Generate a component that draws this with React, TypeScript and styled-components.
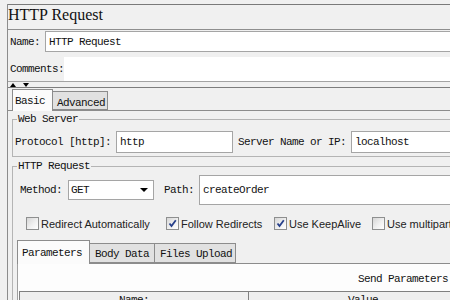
import React from "react";
import styled, { createGlobalStyle } from "styled-components";

const mono = `"Liberation Mono", "DejaVu Sans Mono", monospace`;

const GlobalStyle = createGlobalStyle`
  *, *::before, *::after { box-sizing: border-box; }
  html, body { margin: 0; padding: 0; overflow: hidden; background: #f0f0f0; }
  body { width: 450px; height: 300px; }
`;

const Window = styled.div`
  width: 490px;
  height: 296px;
  margin: 4px 0 0 7px;
  border-left: 1px solid #8c8c8c;
  font-family: ${mono};
  font-size: 11px;
  letter-spacing: -0.6px;
  color: #111;
  overflow: hidden;
`;

const TitleBar = styled.div`
  height: 26px;
  border-top: 1px solid #7a7a7a;
  border-bottom: 1px solid #8e8e8e;
  font-family: "Liberation Serif", serif;
  font-size: 16px;
  letter-spacing: 0;
  line-height: 20px;
`;

const NameRow = styled.div`
  display: flex;
  align-items: center;
  height: 22px;
  padding-top: 1px;
`;

const CommentsRow = styled.div`
  display: flex;
  align-items: center;
  height: 30px;
  padding-top: 5px;
  border-bottom: 1px solid #a3a3a3;
`;

const Caption = styled.span<{ $gap?: number }>`
  flex: none;
  white-space: nowrap;
  line-height: 14px;
  margin-left: ${p => p.$gap ?? 0}px;
`;

const Field = styled.div<{ $width?: number; $height: number; $gap?: number }>`
  flex: ${p => (p.$width ? `0 0 ${p.$width}px` : "1 1 auto")};
  height: ${p => p.$height}px;
  margin-left: ${p => p.$gap ?? 0}px;
  display: flex;
  align-items: center;
  padding: 0 3px;
  background: #fff;
  border: 1px solid #a5a5a5;
  white-space: nowrap;
`;

const CommentsArea = styled.div`
  flex: 1;
  height: 24px;
  background: #fff;
`;

const Divider = styled.div`
  display: flex;
  align-items: center;
  gap: 7px;
  height: 5px;
  padding-left: 2px;
`;

const LowerPanel = styled.div`
  border-top: 1px solid #7d7d7d;
`;

const TabStrip = styled.div<{ $height: number; $indent: number }>`
  display: flex;
  align-items: flex-end;
  height: ${p => p.$height}px;
  padding-left: ${p => p.$indent}px;
  padding-top: 1px;
  border-bottom: 1px solid #8c8c8c;
`;

const Tab = styled.div<{ $active?: boolean; $width: number; $height: number; $pad: number; $top: number }>`
  flex: 0 0 ${p => p.$width}px;
  height: ${p => p.$height}px;
  margin-left: -1px;
  margin-bottom: ${p => (p.$active ? -1 : 0)}px;
  padding-left: ${p => p.$pad}px;
  padding-top: ${p => p.$top}px;
  line-height: 14px;
  white-space: nowrap;
  background: ${p => (p.$active ? "#fbfbfb" : "#e1e1e1")};
  border: 1px solid #8c8c8c;
  border-bottom: ${p => (p.$active ? "none" : "1px solid #8c8c8c")};
  position: relative;
  z-index: ${p => (p.$active ? 1 : 0)};
  &:first-child { margin-left: 0; }
`;

const TabBody = styled.div`
  padding-left: 4px;
`;

const Group = styled.fieldset<{ $top: number }>`
  margin: ${p => p.$top}px 0 0;
  padding: 0 0 3px 2px;
  border: 1px solid #b4b4b4;
  min-width: 0;
`;

const Legend = styled.legend`
  margin-left: 2px;
  padding: 0 1px;
  line-height: 14px;
`;

const Row = styled.div<{ $top: number; $height: number; $indent?: number }>`
  display: flex;
  align-items: center;
  margin-top: ${p => p.$top}px;
  height: ${p => p.$height}px;
  padding-left: ${p => p.$indent ?? 0}px;
`;

const Select = styled.div`
  flex: 0 0 86px;
  height: 20px;
  margin-left: 6px;
  display: flex;
  align-items: center;
  justify-content: space-between;
  padding: 0 5px 0 2px;
  background: #fff;
  border: 1px solid #a5a5a5;
`;

const CheckItem = styled.div<{ $width?: number }>`
  flex: ${p => (p.$width ? `0 0 ${p.$width}px` : "none")};
  display: flex;
  align-items: center;
  gap: 2px;
  font-family: "Liberation Sans", Arial, sans-serif;
  font-size: 11px;
  letter-spacing: 0;
  color: #222;
  white-space: nowrap;
`;

const Box = styled.span`
  width: 13px;
  height: 13px;
  flex: none;
  display: flex;
  align-items: center;
  justify-content: center;
  border: 1px solid #8e8f8f;
  background: linear-gradient(135deg, #d6d6d6 0%, #f0f0f0 55%, #ffffff 100%);
`;

const InnerTabs = styled.div`
  margin: 10px 0 0 2px;
`;

const InnerBody = styled.div`
  height: 60px;
  padding-top: 8px;
  background: #fdfdfd;
  border-left: 1px solid #a0a0a0;
`;

const SendRow = styled.div`
  padding-left: 340px;
  line-height: 14px;
  white-space: nowrap;
`;

const TableHead = styled.div`
  display: flex;
  margin: 5px 0 0 1px;
  border-top: 1px solid #808080;
  border-left: 1px solid #808080;
`;

const HeadCell = styled.div`
  flex: 0 0 229px;
  height: 17px;
  line-height: 16px;
  text-align: center;
  background: #efefef;
  border-right: 1px solid #808080;
`;

function Check({ label, checked, width }: { label: string; checked?: boolean; width?: number }) {
  return (
    <CheckItem $width={width}>
      <Box>
        {checked && (
          <svg width="9" height="9" viewBox="0 0 9 9">
            <path d="M1.5 4.5 L3.5 7 L7.8 1.2" fill="none" stroke="#27408b" strokeWidth="1.8" />
          </svg>
        )}
      </Box>
      {label}
    </CheckItem>
  );
}

function Arrow({ up }: { up?: boolean }) {
  return (
    <svg width="6" height="4" viewBox="0 0 6 4">
      <path d={up ? "M0 4 L3 0 L6 4 Z" : "M0 0 L6 0 L3 4 Z"} fill="#000" />
    </svg>
  );
}

export default function App() {
  return (
    <>
      <GlobalStyle />
      <Window>
        <TitleBar>HTTP Request</TitleBar>
        <NameRow>
          <Caption $gap={2}>Name:</Caption>
          <Field $height={21} $gap={5}>HTTP Request</Field>
        </NameRow>
        <CommentsRow>
          <Caption $gap={2}>Comments:</Caption>
          <CommentsArea />
        </CommentsRow>
        <Divider>
          <Arrow up />
          <Arrow />
        </Divider>
        <LowerPanel>
          <TabStrip $height={23} $indent={4}>
            <Tab $active $width={41} $height={22} $pad={2} $top={4}>Basic</Tab>
            <Tab $width={56} $height={19} $pad={4} $top={4}>Advanced</Tab>
          </TabStrip>
          <TabBody>
            <Group $top={1}>
              <Legend>Web Server</Legend>
              <Row $top={5} $height={22}>
                <Caption>Protocol [http]:</Caption>
                <Field $width={117} $height={22} $gap={5}>http</Field>
                <Caption $gap={5}>Server Name or IP:</Caption>
                <Field $height={22} $gap={5}>localhost</Field>
              </Row>
            </Group>
            <Group $top={2}>
              <Legend>HTTP Request</Legend>
              <Row $top={2} $height={30} $indent={5}>
                <Caption>Method:</Caption>
                <Select>
                  GET
                  <svg width="8" height="4" viewBox="0 0 8 4">
                    <path d="M0 0 L8 0 L4 4 Z" fill="#000" />
                  </svg>
                </Select>
                <Caption $gap={10}>Path:</Caption>
                <Field $height={30} $gap={5}>createOrder</Field>
              </Row>
              <Row $top={12} $height={13} $indent={11}>
                <Check label="Redirect Automatically" width={140} />
                <Check label="Follow Redirects" checked width={108} />
                <Check label="Use KeepAlive" checked width={98} />
                <Check label="Use multipart/form-data for POST" />
              </Row>
              <InnerTabs>
                <TabStrip $height={24} $indent={0}>
                  <Tab $active $width={73} $height={24} $pad={4} $top={5}>Parameters</Tab>
                  <Tab $width={66} $height={20} $pad={5} $top={3}>Body Data</Tab>
                  <Tab $width={82} $height={20} $pad={5} $top={3}>Files Upload</Tab>
                </TabStrip>
                <InnerBody>
                  <SendRow>Send Parameters With the Request:</SendRow>
                  <TableHead>
                    <HeadCell>Name:</HeadCell>
                    <HeadCell>Value</HeadCell>
                  </TableHead>
                </InnerBody>
              </InnerTabs>
            </Group>
          </TabBody>
        </LowerPanel>
      </Window>
    </>
  );
}
